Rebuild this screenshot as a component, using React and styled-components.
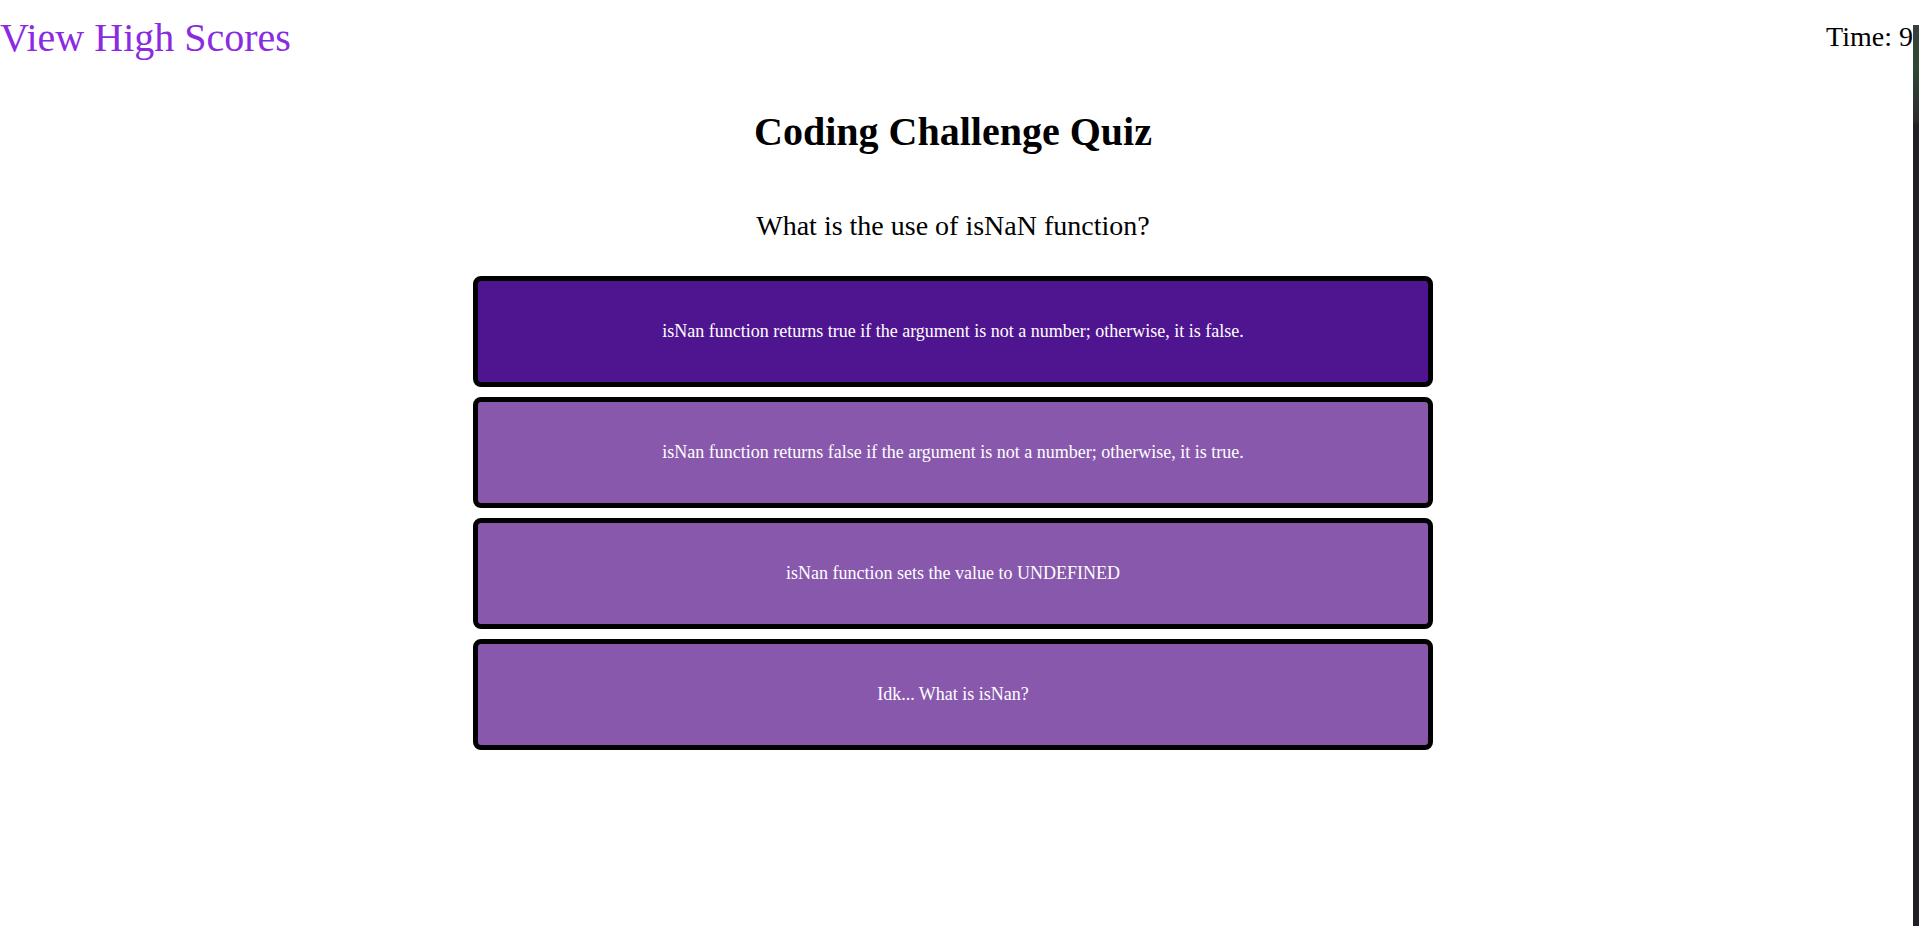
import React, { useState } from "react";
import styled, { createGlobalStyle } from "styled-components";

const GlobalStyle = createGlobalStyle`
  html, body {
    margin: 0;
    padding: 0;
    background: #ffffff;
  }
  body {
    font-family: "Liberation Serif", "Times New Roman", serif;
    color: #000000;
  }
`;

const choices = [
  "isNan function returns true if the argument is not a number; otherwise, it is false.",
  "isNan function returns false if the argument is not a number; otherwise, it is true.",
  "isNan function sets the value to UNDEFINED",
  "Idk... What is isNan?",
];

export default function App() {
  // 첫번째 보기가 선택된 상태
  const [picked, setPicked] = useState(0);

  return (
    <>
      <GlobalStyle />
      <StyledPage>
        <StyledMain>
          <StyledHeader>
            <StyledHighScores href="#">View High Scores</StyledHighScores>
            <StyledTimer>Time: 9</StyledTimer>
          </StyledHeader>
          <StyledQuiz>
            <StyledTitle>Coding Challenge Quiz</StyledTitle>
            <StyledQuestion>What is the use of isNaN function?</StyledQuestion>
            <StyledChoiceList>
              {choices.map((text, i) => (
                <StyledChoice
                  key={i}
                  $active={picked === i}
                  onClick={() => setPicked(i)}
                >
                  {text}
                </StyledChoice>
              ))}
            </StyledChoiceList>
          </StyledQuiz>
        </StyledMain>
        <StyledSideStrip />
      </StyledPage>
    </>
  );
}

const StyledPage = styled.div`
  display: flex;
  width: 100%;
  min-height: 926px;
`;

const StyledMain = styled.div`
  flex: 1;
  min-width: 0;
`;

const StyledHeader = styled.header`
  display: flex;
  justify-content: space-between;
  align-items: flex-start;
  height: 58px;
`;

const StyledHighScores = styled.a`
  margin-top: 18px;
  font-size: 40px;
  line-height: 40px;
  color: #8a2be2;
  text-decoration: none;
`;

const StyledTimer = styled.span`
  margin-top: 23px;
  font-size: 28px;
  line-height: 28px;
  white-space: nowrap;
`;

const StyledQuiz = styled.section`
  display: flex;
  flex-direction: column;
  align-items: center;
  padding-right: 7px;
`;

const StyledTitle = styled.h1`
  margin: 54px 0 0 0;
  font-size: 40px;
  line-height: 40px;
  font-weight: 700;
`;

const StyledQuestion = styled.p`
  margin: 60px 0 0 0;
  font-size: 28px;
  line-height: 28px;
`;

const StyledChoiceList = styled.div`
  display: flex;
  flex-direction: column;
  gap: 10px;
  margin-top: 36px;
  width: 960px;
`;

const StyledChoice = styled.button`
  box-sizing: border-box;
  width: 100%;
  height: 111px;
  border: 5px solid #000000;
  border-radius: 8px;
  background: ${(props) => (props.$active ? "#4f1591" : "#8858ad")};
  color: #ffffff;
  font-family: "Liberation Serif", "Times New Roman", serif;
  font-size: 18px;
  cursor: pointer;
`;

const StyledSideStrip = styled.div`
  flex: 0 0 6px;
  margin-top: 25px;
  background: linear-gradient(
    to bottom,
    #3a3d40 0px,
    #2d4a30 40px,
    #2a2c2e 95px,
    #1f2023 100px
  );
`;
